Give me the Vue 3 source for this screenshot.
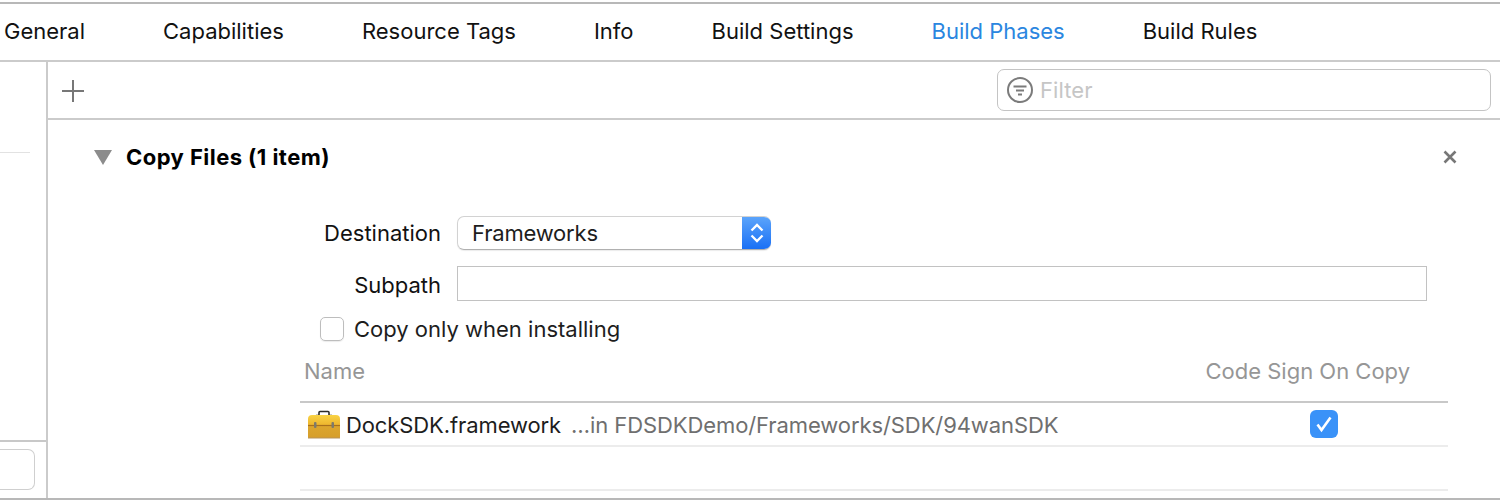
<script setup>
const tabs = ['General', 'Capabilities', 'Resource Tags', 'Info', 'Build Settings', 'Build Phases', 'Build Rules']
const activeTab = 'Build Phases'
</script>

<template>
  <div class="window">
    <nav class="tabs">
      <span v-for="t in tabs" :key="t" class="tab" :class="{ active: t === activeTab }">{{ t }}</span>
    </nav>
    <div class="body">
      <aside class="side">
        <div class="side-top"><div class="side-rule"></div></div>
        <div class="side-bottom"><div class="side-field"></div></div>
      </aside>
      <main class="main">
        <div class="toolbar">
          <svg class="plus" width="24" height="24" viewBox="0 0 24 24">
            <path d="M12 1v22M1 12h22" stroke="#777" stroke-width="2" fill="none" />
          </svg>
          <div class="filter">
            <svg class="filter-icon" width="28" height="28" viewBox="0 0 28 28">
              <circle cx="14" cy="14" r="12" stroke="#7b7b7b" stroke-width="2" fill="none" />
              <path d="M7.5 10.5h13M10 14.5h8M12 18.5h4" stroke="#7b7b7b" stroke-width="2" fill="none" />
            </svg>
            <span class="filter-text">Filter</span>
          </div>
        </div>
        <section class="phase">
          <header class="phase-head">
            <svg class="tri" width="18" height="15" viewBox="0 0 18 15"><path d="M0 0h18L9 15z" fill="#8c8c8c" /></svg>
            <span class="phase-title">Copy Files (1 item)</span>
            <svg class="close" width="14" height="14" viewBox="0 0 14 14">
              <path d="M1.5 1.5l11 11M12.5 1.5l-11 11" stroke="#777" stroke-width="2.6" fill="none" />
            </svg>
          </header>
          <div class="form">
            <div class="form-row dest">
              <label class="form-label">Destination</label>
              <div class="select">
                <span class="select-text">Frameworks</span>
                <span class="select-btn">
                  <svg width="14" height="24" viewBox="0 0 14 24">
                    <path d="M1.5 9.500L7 4l5.500 5.500M1.500 14.500L7 20l5.500-5.500" stroke="#fff" stroke-width="2.300" fill="none" />
                  </svg>
                </span>
              </div>
            </div>
            <div class="form-row sub">
              <label class="form-label sub-label">Subpath</label>
              <div class="input"></div>
            </div>
            <div class="only">
              <span class="box"></span>
              <span>Copy only when installing</span>
            </div>
          </div>
          <div class="table">
            <div class="thead">
              <span>Name</span>
              <span>Code Sign On Copy</span>
            </div>
            <div class="row">
              <svg class="toolbox" width="34" height="30" viewBox="0 0 34 30">
                <defs>
                  <linearGradient id="lid" x1="0" y1="0" x2="0" y2="1">
                    <stop offset="0" stop-color="#f9d344" />
                    <stop offset="1" stop-color="#ecb22c" />
                  </linearGradient>
                  <linearGradient id="base" x1="0" y1="0" x2="0" y2="1">
                    <stop offset="0" stop-color="#dca62e" />
                    <stop offset="1" stop-color="#d69e2a" />
                  </linearGradient>
                </defs>
                <path d="M9 6.500h3V3.500Q12 2.500 13 2.500h8Q22 2.500 22 3.500V6.500h3" stroke="#2b2b2b" stroke-width="1.600" fill="none" />
                <path d="M1 17V10q0-4 4-4h24q4 0 4 4v7z" fill="url(#lid)" />
                <path d="M1 16h32v12.500q0 .5-.5.5h-31q-.5 0-.5-.5z" fill="url(#base)" />
                <path d="M1 16.500h32" stroke="#a9701c" stroke-width="1.200" />
                <path d="M1 29h32" stroke="#b8935a" stroke-width="1" />
                <rect x="7" y="13" width="2.500" height="6" rx="1" fill="#7d7a6c" />
                <rect x="24.500" y="13" width="2.500" height="6" rx="1" fill="#7d7a6c" />
              </svg>
              <span class="fname">DockSDK.framework</span>
              <span class="fpath">…in FDSDKDemo/Frameworks/SDK/94wanSDK</span>
              <span class="check">
                <svg width="28" height="28" viewBox="0 0 28 28">
                  <path d="M7.500 14.500l4 5.500L20.500 7.500" stroke="#fff" stroke-width="2.600" fill="none" />
                </svg>
              </span>
            </div>
            <div class="row empty"></div>
          </div>
        </section>
      </main>
    </div>
  </div>
</template>

<style>
body { margin: 0; background: #fff; }
</style>

<style scoped>
.window {
  width: 1500px;
  height: 500px;
  box-sizing: border-box;
  display: flex;
  flex-direction: column;
  overflow: hidden;
  background: #fff;
  padding-top: 2px;
  font-family: Inter, "Liberation Sans", sans-serif;
  font-size: 22px;
  color: #111;
  border-bottom: 2px solid #b8b8b8;
}
.tabs {
  height: 54px;
  padding-bottom: 2px;
  box-sizing: content-box;
  border-top: 2px solid #b8b8b8;
  border-bottom: 2px solid #cbcbcb;
  display: flex;
  align-items: center;
  gap: 78px;
  padding-left: 4px;
  flex: none;
}
.tab { white-space: nowrap; }
.tab.active { color: #2a86e0; }
.body { flex: 1; display: flex; min-height: 0; }
.side {
  width: 46px;
  flex: none;
  border-right: 2px solid #cbcbcb;
  display: flex;
  flex-direction: column;
}
.side-top { flex: 1; padding-top: 90px; }
.side-rule { width: 30px; height: 1px; background: #e2e2e2; }
.side-bottom {
  height: 58px;
  border-top: 2px solid #c8c8c8;
  padding-top: 7px;
  box-sizing: border-box;
}
.side-field {
  width: 35px;
  height: 41px;
  box-sizing: border-box;
  border: 1px solid #cfcfcf;
  border-left: none;
  border-radius: 0 7px 7px 0;
}
.main { flex: 1; min-width: 0; display: flex; flex-direction: column; }
.toolbar {
  height: 56px;
  flex: none;
  box-sizing: content-box;
  border-bottom: 2px solid #cbcbcb;
  display: flex;
  align-items: center;
  justify-content: space-between;
  padding: 0 9px 0 13px;
}
.plus { flex: none; margin-top: 2px; }
.filter {
  width: 494px;
  height: 42px;
  box-sizing: border-box;
  border: 1px solid #c4c4c4;
  border-radius: 7px;
  display: flex;
  align-items: center;
  padding-left: 8px;
  gap: 6px;
  margin-bottom: 1px;
}
.filter-icon { flex: none; }
.filter-text { color: #c6c6c6; font-size: 22px; letter-spacing: 0.1px; }
.phase { flex: 1; position: relative; }
.phase-head {
  display: flex;
  align-items: center;
  height: 38px;
  margin-top: 18px;
  padding: 0 43px 0 46px;
}
.tri { flex: none; margin-right: 14px; }
.phase-title { font-weight: 700; flex: 1; color: #000; letter-spacing: 0.45px; }
.close { flex: none; }
.form {
  margin-top: 40px;
  display: flex;
  flex-direction: column;
}
.form-row { display: flex; align-items: center; }
.form-label { width: 393px; text-align: right; margin-right: 16px; flex: none; }
.sub-label { margin-top: 2px; }
.dest { height: 34px; }
.sub { height: 35px; margin-top: 16px; }
.select {
  width: 314px;
  height: 34px;
  box-sizing: border-box;
  border: 1px solid #d2d2d2;
  border-right: none;
  border-bottom-color: #b0b0b0;
  border-radius: 7px;
  display: flex;
  align-items: center;
  justify-content: space-between;
  padding-left: 14px;
  overflow: hidden;
  box-shadow: 0 1px 1px rgba(0, 0, 0, 0.08);
}
.select-text { color: #1d1d1d; letter-spacing: -0.2px; }
.select-btn {
  width: 29px;
  align-self: stretch;
  background: linear-gradient(#5ba4fb, #1a70f5);
  display: flex;
  align-items: center;
  justify-content: center;
}
.input {
  width: 970px;
  height: 35px;
  box-sizing: border-box;
  border: 1px solid #c2c2c2;
}
.only {
  display: flex;
  align-items: center;
  gap: 10px;
  height: 28px;
  margin: 14px 0 0 272px;
  color: #1d1d1d;
}
.box {
  width: 24px;
  height: 24px;
  box-sizing: border-box;
  border: 1px solid #bdbdbd;
  border-radius: 5px;
  box-shadow: 0 1px 1px rgba(0, 0, 0, 0.08);
}
.table { margin: 0 52px 0 252px; }
.thead {
  height: 60px;
  box-sizing: border-box;
  padding: 0 38px 2px 4px;
  display: flex;
  align-items: center;
  justify-content: space-between;
  color: #969696;
  border-bottom: 2px solid #c8c8c8;
}
.row {
  height: 42px;
  border-bottom: 2px solid #ececec;
  display: flex;
  align-items: center;
  padding-left: 7px;
  position: relative;
  box-sizing: content-box;
}
.row.empty { height: 42px; }
.toolbox { flex: none; margin-right: 5px; }
.fname { color: #1d1d1d; margin: 2px 10px 0 0; letter-spacing: -0.1px; }
.fpath { color: #6f6f6f; flex: 1; margin-top: 2px; letter-spacing: -0.09px; }
.check {
  width: 28px;
  height: 28px;
  border-radius: 6px;
  background: #3a92f8;
  margin-right: 110px;
  flex: none;
  display: flex;
}
</style>
